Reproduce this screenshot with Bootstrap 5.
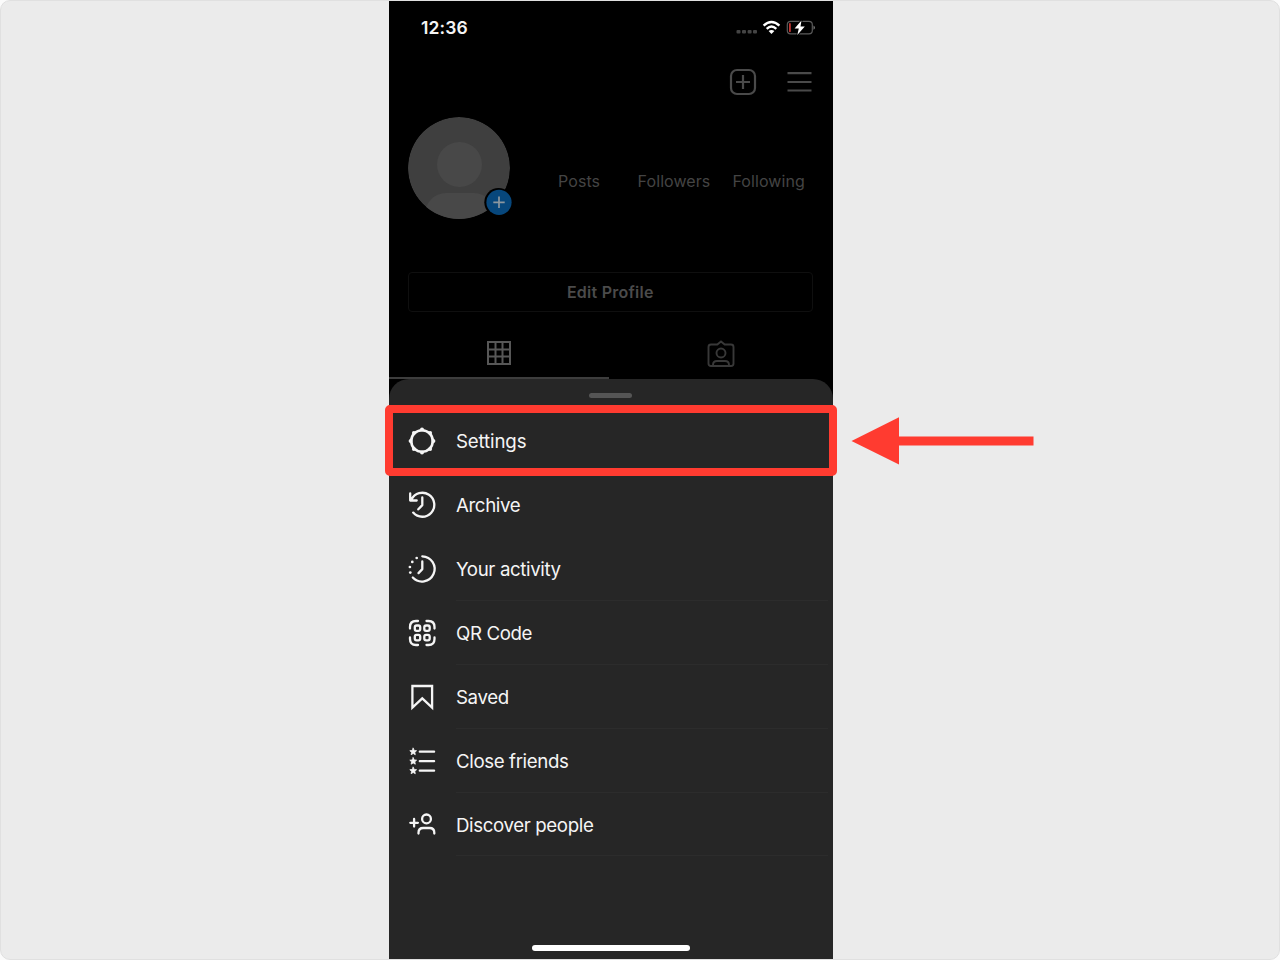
<!DOCTYPE html>
<html lang="en">
<head>
<meta charset="utf-8">
<meta name="viewport" content="width=device-width, initial-scale=1">
<title>Profile menu</title>
<link href="https://cdn.jsdelivr.net/npm/bootstrap@5.3.0/dist/css/bootstrap.min.css" rel="stylesheet">
<style>
  body { background: #fbfbfb; font-family: Inter, "Liberation Sans", sans-serif; height: 960px; }
  .stage { width: 1280px; height: 960px; background: #ebebeb; border: 1px solid #e0e0e0; border-radius: 10px; }
  .phone { width: 443.5px; height: 957.5px; margin-left: 388px; background: #000; color: #444; fill: none; stroke: currentColor; }
  svg { display: block; flex: none; overflow: visible; }
  .status { height: 53px; padding: 0 18px 0 32px; color: #f4f4f4; }
  .clock { font-size: 17.5px; font-weight: 600; line-height: 53px; letter-spacing: .15px; }
  .status svg { margin-top: -1px; }
  .tools { height: 56px; padding-right: 21px; gap: 30px; }
  .profile { height: 122px; padding: 7px 19px 0; }
  .avatar { width: 102px; height: 102px; }
  .stat { font-size: 16px; line-height: 24px; padding-top: 12px; white-space: nowrap; letter-spacing: .08px; color: #444; }
  .edit-btn { margin: 40px 20px 0 19px; height: 40px; border: 1px solid #0f0f0f; border-radius: 4px; font-size: 16px; font-weight: 600; letter-spacing: .25px; color: #4b4b4b; }
  .tabs, .tabs > div { height: 67px; }
  .tabs svg { margin-top: 16px; }
  .tabs .chosen { width: 220px; border-bottom: 2px solid #3d3d3d; color: #575757; }
  .sheet { background: #262626; border-radius: 20px 20px 0 0; color: #f5f5f5; }
  .grip { width: 43px; height: 5px; border-radius: 3px; background: #555; margin: 13.5px auto 11.7px; }
  .item { height: 63.9px; padding-left: 19px; gap: 20px; stroke-width: 2.3; stroke-linecap: round; stroke-linejoin: round; }
  .item .words { font-size: 18.7px; font-weight: 400; letter-spacing: -.38px; flex: 1; margin-right: 5px; height: 100%; border-bottom: 1px solid transparent; line-height: 65.500px; white-space: nowrap; }
  .item.current .words { letter-spacing: -.15px; }
  .ruled .words { border-color: #2c2c2c; }
  .frame { position: absolute; left: -4px; right: -4px; top: -4px; height: 71px; border: 8.5px solid #ff3b30; border-radius: 5px; }
  .pointer { position: absolute; left: 463px; top: 8px; }
  .home { width: 158px; height: 6px; border-radius: 3px; background: #fff; margin: auto auto 8px; }
</style>
</head>
<body>
<div class="stage">
  <main class="phone d-flex flex-column">
    <div class="status d-flex align-items-center">
      <div class="clock me-auto">12:36</div>
      <svg width="79" height="20" viewBox="736 17 79 20" stroke="none">
        <g fill="#444"><rect x="736.5" y="30" width="4" height="3.6" rx="1"/><rect x="742" y="30" width="4" height="3.6" rx="1"/><rect x="747.6" y="30" width="4" height="3.6" rx="1"/><rect x="753" y="30" width="4" height="3.6" rx="1"/></g>
        <g stroke="#fff" stroke-width="2.4"><path d="M763.6 25.6q7.9-7.3 15.8 0M766.7 28.8q4.8-4.4 9.6 0"/></g>
        <path fill="#fff" d="M768.6 31.1q2.9-2.2 5.8 0l-2.900 3z"/>
        <rect x="787.3" y="21.3" width="25" height="12.6" rx="3.4" stroke="#5b5b5b" stroke-width="1.2"/>
        <path fill="#777" d="M813.5 25.4q3 2.2 0 4.4z"/>
        <rect x="789" y="23" width="1.8" height="9.2" rx=".9" fill="#c33532"/>
        <path fill="#fff" stroke="#000" stroke-width="2" paint-order="stroke" d="M801.5 20.600l-6.900 7.900h4.200l-1.500 6.400 7.500-8.400h-4.300z"/>
      </svg>
    </div>
    <div class="tools d-flex align-items-center justify-content-end">
      <svg width="28" height="28" viewBox="0 0 28 28" stroke-width="2.2" stroke="#4a4a4a"><rect x="2" y="2" width="24" height="24" rx="6"/><path d="M14 7v14M7 14h14"/></svg>
      <svg width="25" height="28" viewBox="0 0 25 28" stroke-width="2.2" stroke="#4a4a4a"><path d="M.5 5.200h24M.5 14h24M.5 22.500h24"/></svg>
    </div>
    <div class="profile d-flex">
      <div class="avatar">
        <svg width="106" height="104" viewBox="0 0 106 104" stroke="none">
          <defs><clipPath id="face"><circle cx="51" cy="51" r="51"/></clipPath></defs>
          <g clip-path="url(#face)"><circle cx="51" cy="51" r="51" fill="#3f3f3f"/><circle cx="51.5" cy="47.5" r="22.5" fill="#484848"/><path fill="#484848" d="M14 102q6-26 24-26h28q18 0 24 26z"/></g>
          <circle cx="90.5" cy="85.3" r="14.2" fill="#000"/><circle cx="91" cy="85.3" r="12.6" fill="#07477c"/>
          <path d="M85.300 85.300h11.400M91 79.600V91" stroke="#8c979f" stroke-width="1.7"/>
        </svg>
      </div>
      <div class="d-flex align-items-center">
        <div class="stat" style="margin-left:48px">Posts</div>
        <div class="stat" style="margin-left:37.5px">Followers</div>
        <div class="stat" style="margin-left:22px">Following</div>
      </div>
    </div>
    <div class="edit-btn d-flex align-items-center justify-content-center">Edit Profile</div>
    <div class="tabs d-flex">
      <div class="chosen d-flex justify-content-center align-items-center"><svg width="24" height="24" viewBox="0 0 24 24" stroke-width="2"><path d="M1 1h22v22H1zM8.500 1v22M15.500 1v22M1 8.500h22M1 15.500h22"/></svg></div>
      <div class="flex-grow-1 d-flex justify-content-center align-items-center"><svg width="28" height="28" viewBox="0 0 28 28" stroke-width="1.9" stroke="#383838"><path d="M4 4.500h6.300L14 1.500l3.700 3H24q2.500 0 2.500 2.500v16.500q0 2.500-2.500 2.500H4q-2.500 0-2.500-2.500V7Q1.500 4.500 4 4.500zM6 26v-1q0-4 4-4h8q4 0 4 4v1"/><circle cx="14" cy="13" r="4.5"/></svg></div>
    </div>
    <section class="sheet flex-grow-1 d-flex flex-column">
      <div class="grip"></div>
      <div class="item current d-flex align-items-center position-relative">
        <svg width="28" height="28" viewBox="-14 -14 28 28"><circle r="10.800" stroke-width="2.600"/><g fill="currentColor" stroke="none"><circle cy="-11.400" r="2"/><circle cy="11.400" r="2"/><circle cx="-11.400" r="2"/><circle cx="11.400" r="2"/><circle cx="8.100" cy="8.100" r="2"/><circle cx="-8.100" cy="8.100" r="2"/><circle cx="8.100" cy="-8.100" r="2"/><circle cx="-8.100" cy="-8.100" r="2"/></g></svg>
        <div class="words">Settings</div>
        <div class="frame"></div>
        <svg class="pointer" width="182" height="48" viewBox="0 0 182 48" stroke="none"><path fill="#ff3b30" d="M-.5 24L47 .3v19.200h134.500v9H47v19z"/></svg>
      </div>
      <div class="item d-flex align-items-center">
        <svg width="28" height="28" viewBox="0 0 28 28"><path d="M5.200 21.600A12 12 0 1 0 3.500 8.500M2.200 2.500v7H8.700M14.300 6.500v7.600l-4 4.200"/></svg>
        <div class="words">Archive</div>
      </div>
      <div class="item ruled d-flex align-items-center">
        <svg width="28" height="28" viewBox="0 0 28 28"><path d="M14.300 1.300a12.600 12.600 0 1 1-9.500 21.200M14.300 6.500v7.600l-3.800 4"/><g fill="currentColor" stroke="none"><circle cx="8.700" cy="3" r="1.350"/><circle cx="4.300" cy="6.900" r="1.350"/><circle cx="1.900" cy="12" r="1.350"/><circle cx="2.300" cy="17.600" r="1.350"/></g></svg>
        <div class="words">Your activity</div>
      </div>
      <div class="item ruled d-flex align-items-center">
        <svg width="28" height="28" viewBox="0 0 28 28"><path d="M2 9.500V8q0-6 6-6h2M18.500 2h2q6 0 6 6v1.500M26.500 18.500V20q0 6-6 6h-2M10 26H8q-6 0-6-6v-1.500"/><rect x="6.800" y="6.500" width="5.400" height="5.400" rx="1.800"/><rect x="16.300" y="6.500" width="5.400" height="5.400" rx="1.800"/><rect x="6.800" y="15.900" width="5.400" height="5.400" rx="1.800"/><rect x="16.300" y="15.900" width="5.400" height="5.400" rx="1.800"/></svg>
        <div class="words">QR Code</div>
      </div>
      <div class="item ruled d-flex align-items-center">
        <svg width="28" height="28" viewBox="0 0 28 28"><path stroke-linejoin="miter" d="M4.400 3h19.700v21.600l-9.850-9.200L4.400 24.600z"/></svg>
        <div class="words">Saved</div>
      </div>
      <div class="item ruled d-flex align-items-center">
        <svg width="28" height="28" viewBox="0 0 28 28"><defs><path id="star" fill="currentColor" stroke-width=".8" d="M0-3.400l1 2.200 2.400.3-1.800 1.600.5 2.400L0 1.900l-2.100 1.200.5-2.400-1.800-1.600 2.400-.3z"/></defs><use href="#star" x="5.200" y="4.600"/><use href="#star" x="5.200" y="14.100"/><use href="#star" x="5.200" y="23.600"/><path d="M11.800 4.700h14.300M11.800 14.200h14.300M11.800 23.700h14.300"/></svg>
        <div class="words">Close friends</div>
      </div>
      <div class="item ruled d-flex align-items-center">
        <svg width="28" height="28" viewBox="0 0 28 28"><path d="M2.300 12.800h7.600M6.100 9v7.600M10.500 23.500v-.8q0-4.700 4.700-4.700h6.400q4.700 0 4.700 4.700v.8"/><circle cx="18.500" cy="8.900" r="4.400"/></svg>
        <div class="words">Discover people</div>
      </div>
      <div class="home"></div>
    </section>
  </main>
</div>
<script src="https://cdn.jsdelivr.net/npm/bootstrap@5.3.0/dist/js/bootstrap.bundle.min.js"></script>
</body>
</html>
